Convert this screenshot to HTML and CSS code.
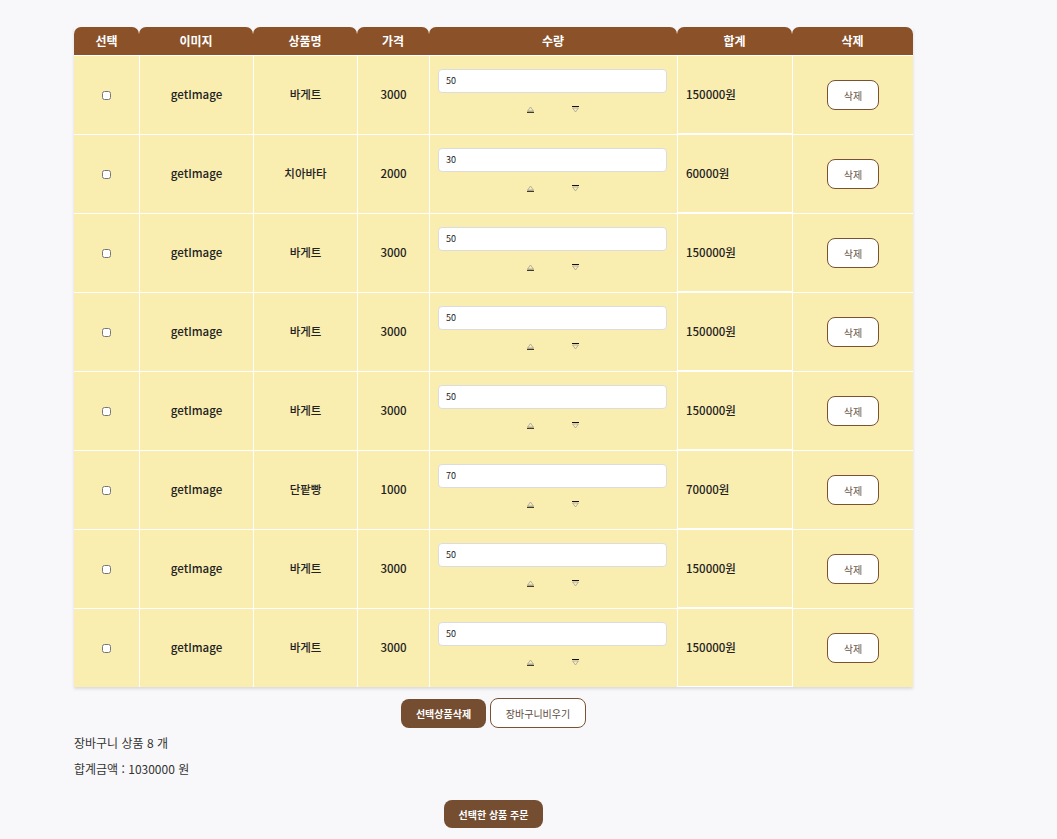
FILE: index.html
```html
<!DOCTYPE html>
<html lang="ko">
<head>
<meta charset="utf-8">
<title>장바구니</title>
<link rel="stylesheet" href="styles.css">
</head>
<body>
<div class="cart">
  <table class="cart-table">
    <colgroup>
      <col class="c1"><col class="c2"><col class="c3"><col class="c4"><col class="c5"><col class="c6"><col class="c7">
    </colgroup>
    <thead>
      <tr><th>선택</th><th>이미지</th><th>상품명</th><th>가격</th><th>수량</th><th>합계</th><th>삭제</th></tr>
    </thead>
    <tbody id="rows"></tbody>
  </table>
  <div class="actions">
    <button class="btn btn-fill">선택상품삭제</button>
    <button class="btn btn-line">장바구니비우기</button>
  </div>
  <p class="info">장바구니 상품 8 개</p>
  <p class="info">합계금액 : 1030000 원</p>
  <div class="order">
    <button class="btn btn-order">선택한 상품 주문</button>
  </div>
</div>
<script src="script.js"></script>
</body>
</html>
```

FILE: script.js
```js
const items = [
  ["바게트", 3000, 50],
  ["치아바타", 2000, 30],
  ["바게트", 3000, 50],
  ["바게트", 3000, 50],
  ["바게트", 3000, 50],
  ["단팥빵", 1000, 70],
  ["바게트", 3000, 50],
  ["바게트", 3000, 50]
];
const up = '<svg width="9" height="7" viewBox="0 0 9 7"><path d="M4.5 1 L7.4 5 L1.6 5 Z" fill="none" stroke="#999" stroke-width="0.7"/><rect x="1" y="5.8" width="7" height="1" fill="#111"/></svg>';
const down = '<svg width="9" height="7" viewBox="0 0 9 7"><rect x="1" y="0" width="7" height="1" fill="#111"/><path d="M1.6 2 L7.4 2 L4.5 6 Z" fill="none" stroke="#999" stroke-width="0.7"/></svg>';
const tbody = document.getElementById("rows");
tbody.innerHTML = items.map(([name, price, qty]) => `
  <tr>
    <td><input type="checkbox" class="chk"></td>
    <td>getImage</td>
    <td>${name}</td>
    <td>${price}</td>
    <td class="qty">
      <input type="text" class="qty-input" value="${qty}">
      <div class="arrows"><span class="arrow">${up}</span><span class="arrow">${down}</span></div>
    </td>
    <td class="total">${price * qty}원</td>
    <td class="del-cell"><button class="del">삭제</button></td>
  </tr>`).join("");
```

FILE: styles.css
```css
* { box-sizing: border-box; }
body {
  margin: 0;
  background: #f8f8fa;
  font-family: "Noto Sans CJK KR", "Noto Sans", sans-serif;
  color: #222;
}
.cart {
  width: 839px;
  margin: 27px 0 0 74px;
}
.cart-table {
  width: 839px;
  table-layout: fixed;
  border-collapse: separate;
  border-spacing: 0;
  box-shadow: 0 2px 3px rgba(0, 0, 0, 0.12);
}
.c1 { width: 65px; }
.c2 { width: 114px; }
.c3 { width: 104px; }
.c4 { width: 72px; }
.c5 { width: 248px; }
.c6 { width: 115px; }
.c7 { width: 121px; }
.cart-table th {
  height: 28px;
  padding: 0;
  background: #8b5229;
  color: #fff;
  font-size: 12px;
  font-weight: 700;
  border-radius: 7px 7px 0 0;
  line-height: 28px;
}
.cart-table td {
  height: 79px;
  padding: 0 0 2px;
  background: #f9edb0;
  border-top: 1px solid #fff;
  border-left: 1px solid #fff;
  text-align: center;
  vertical-align: middle;
  font-size: 11.5px;
  font-weight: 500;
  color: #222;
}
.cart-table td:first-child { border-left: none; }
.chk {
  width: 9px;
  height: 9px;
  margin: 0;
  vertical-align: middle;
}
.cart-table td.qty {
  vertical-align: top;
  padding: 13px 10px 0 8px;
}
.qty-input {
  display: block;
  width: 100%;
  height: 24px;
  border: 1px solid #dcdcdc;
  border-radius: 4px;
  background: #fff;
  font-family: inherit;
  font-size: 9px;
  padding: 0 7px 2px;
  color: #222;
}
.arrows {
  display: flex;
  justify-content: center;
  gap: 36px;
  margin-top: 13px;
  height: 7px;
}
.arrow { display: block; line-height: 0; }
.cart-table td.total {
  text-align: left;
  padding-left: 8px;
  border: 1px solid #fff;
  border-right: none;
}
.cart-table td.del-cell {
  border-left: 1px solid #fff;
  padding: 0;
}
.del {
  width: 52px;
  height: 30px;
  background: #fff;
  border: 1px solid #7a5232;
  border-radius: 8px;
  font-family: inherit;
  font-size: 10px;
  color: #6b5446;
  cursor: pointer;
}
.actions {
  display: flex;
  justify-content: center;
  gap: 4px;
  margin-top: 11px;
}
.btn {
  font-family: inherit;
  font-size: 10px;
  border-radius: 8px;
  cursor: pointer;
  padding: 0;
}
.btn-fill {
  width: 85px;
  height: 29px;
  margin-top: 1px;
  background: #754d31;
  border: none;
  color: #fff;
  font-weight: 700;
}
.btn-line {
  width: 96px;
  height: 30px;
  background: #fff;
  border: 1px solid #7a5232;
  color: #5e4a3e;
}
.info {
  margin: 0;
  font-size: 12px;
  color: #333;
  line-height: 17px;
}
.info:first-of-type { margin-top: 6px; }
.info + .info { margin-top: 9px; }
.order {
  display: flex;
  justify-content: center;
  margin-top: 23px;
}
.btn-order {
  width: 99px;
  height: 28px;
  background: #754d31;
  border: none;
  color: #fff;
  font-weight: 700;
}
```
